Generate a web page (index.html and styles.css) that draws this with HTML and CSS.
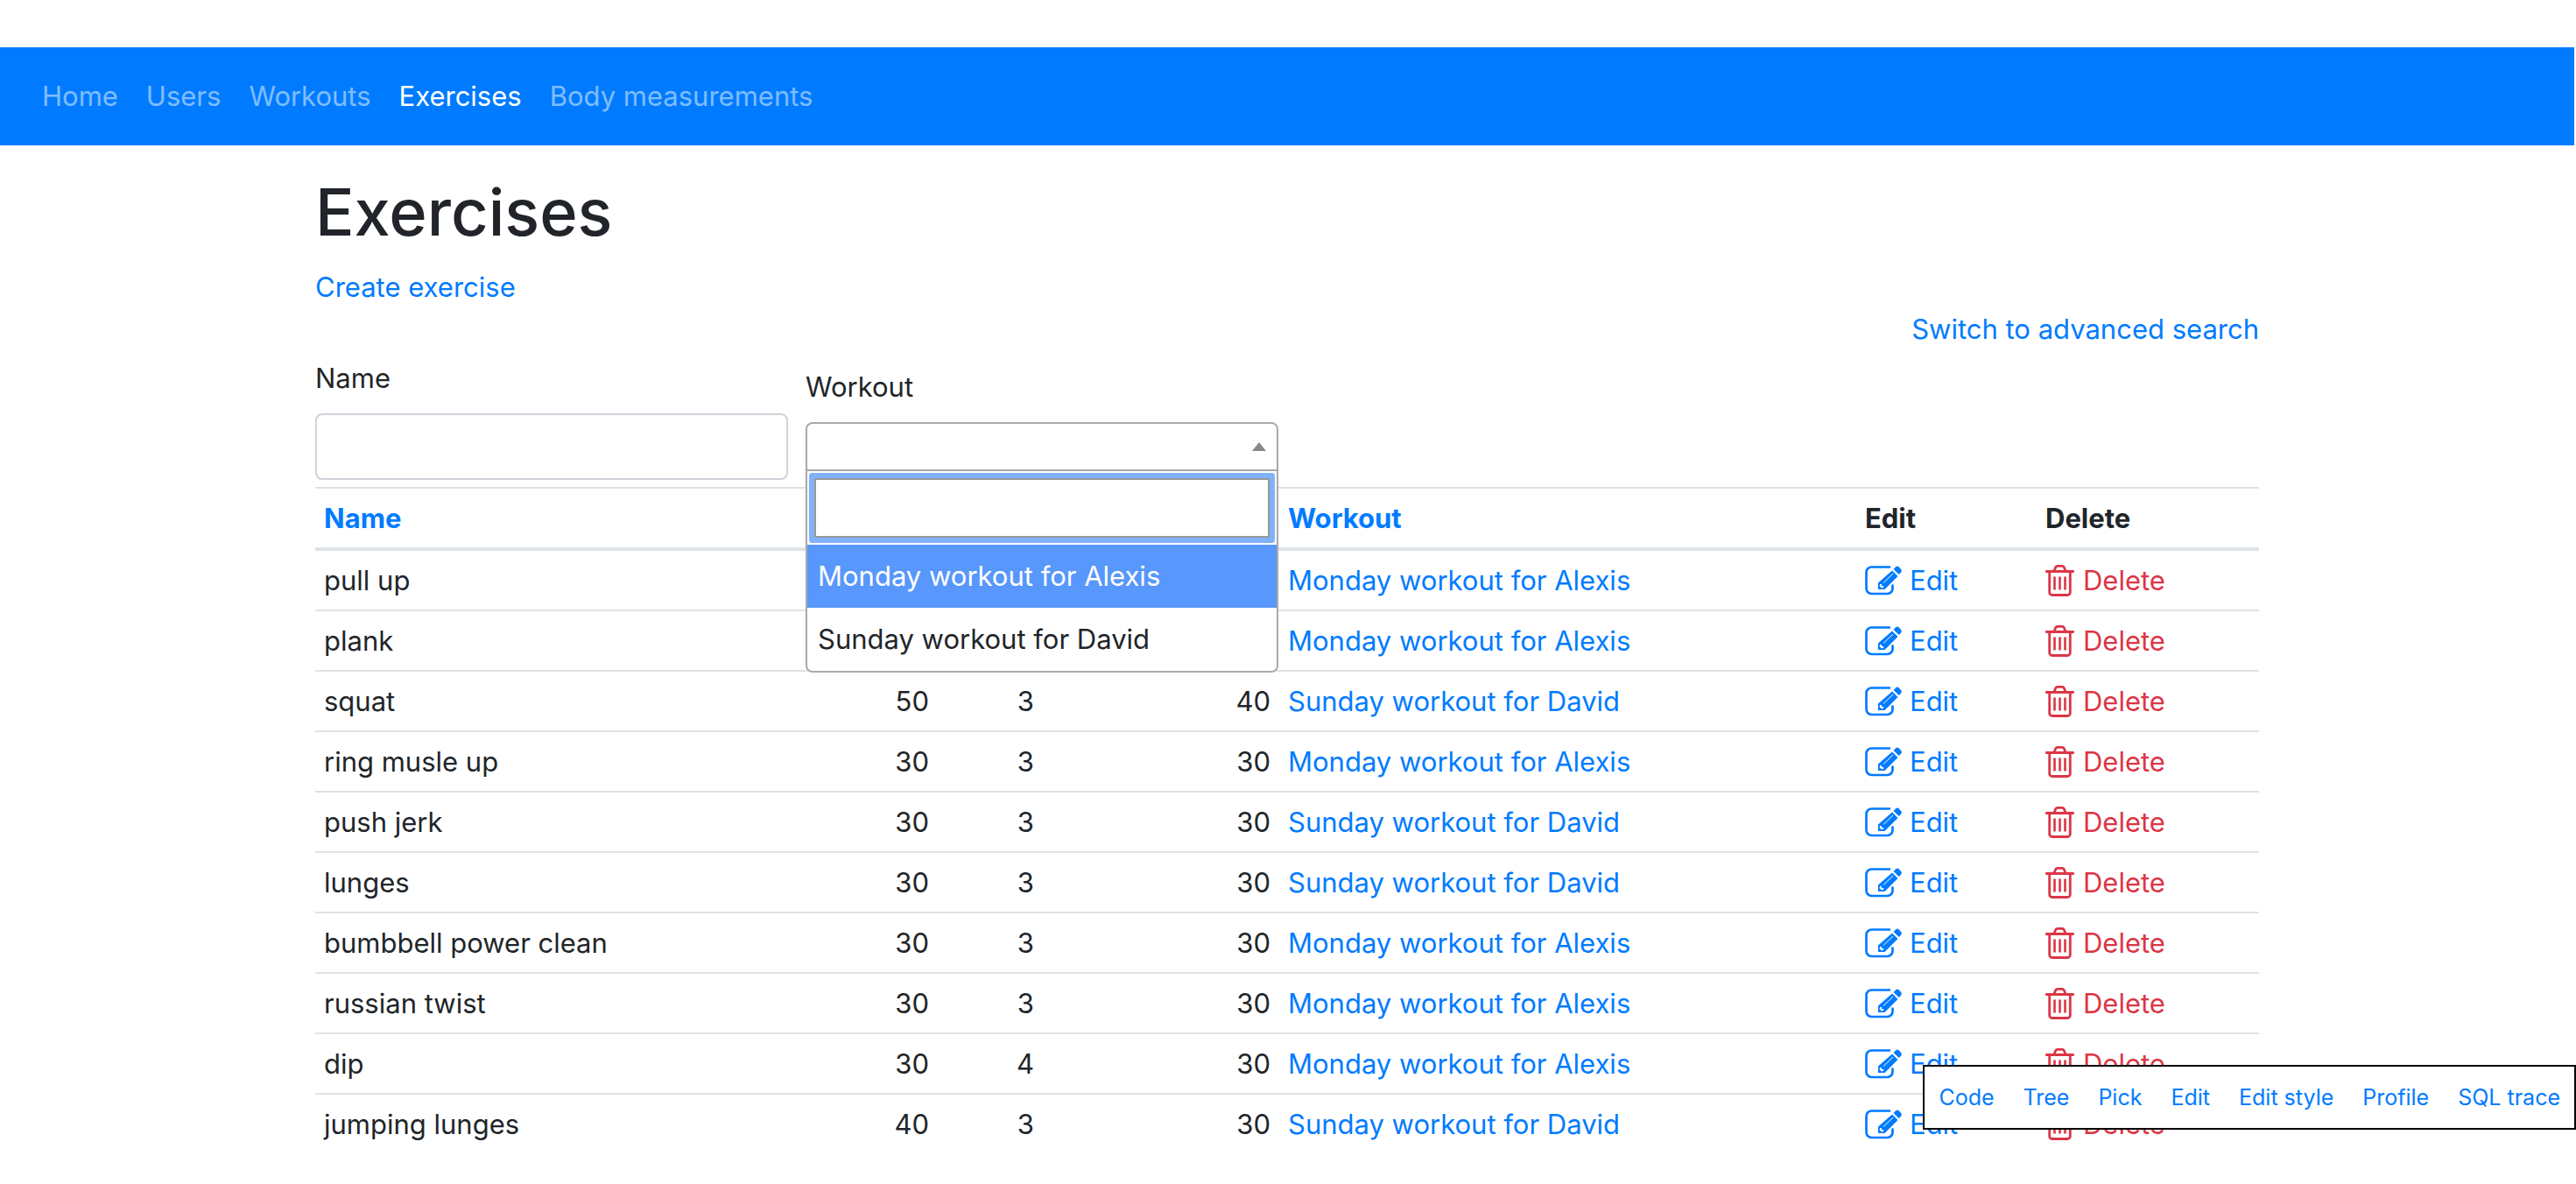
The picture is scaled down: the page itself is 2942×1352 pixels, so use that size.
FILE: index.html
```html
<!DOCTYPE html>
<html lang="en">
<head>
<meta charset="utf-8">
<title>Exercises</title>
<link rel="stylesheet" href="styles.css">
</head>
<body>
<svg class="sprite" aria-hidden="true">
  <symbol id="icon-edit" viewBox="0 0 42 34">
    <path d="M28 1.500H7.500a6 6 0 0 0-6 6v18.500a6 6 0 0 0 6 6h18a6 6 0 0 0 6-6V22.500" fill="none" stroke="currentColor" stroke-width="2.700" stroke-linecap="round"/>
    <path d="M31 5.500l6.500 6.500L22.500 27H15v-7.500z" fill="currentColor"/>
    <path d="M32.500 4l2.800-2.800a2.400 2.400 0 0 1 3.200 0l2.400 2.600a3 3 0 0 1 0 4L38.800 10z" fill="currentColor"/>
    <path d="M21 19.500L32 9" stroke="#fff" stroke-width="1" fill="none"/>
    <path d="M17.300 21h1.700v2h2.200v1.800l-2.200.7-2.500-2.500z" fill="#fff"/>
  </symbol>
  <symbol id="icon-trash" viewBox="0 0 34 36">
    <path d="M1.300 7.500h30.400M4.700 8v23.500a3 3 0 0 0 3 3h17.600a3 3 0 0 0 3-3V8M10 7l1.300-3.300a3 3 0 0 1 2.700-2.300h5a3 3 0 0 1 2.700 2.300L23 7" fill="none" stroke="currentColor" stroke-width="2.800" stroke-linecap="round"/>
    <path d="M10.500 13.500v15M16.500 13.500v15M22.500 13.500v15" fill="none" stroke="currentColor" stroke-width="2.600"/>
  </symbol>
</svg>
<nav class="navbar">
  <a href="#">Home</a>
  <a href="#">Users</a>
  <a href="#">Workouts</a>
  <a href="#" class="active">Exercises</a>
  <a href="#">Body measurements</a>
</nav>
<main class="container">
  <h1>Exercises</h1>
  <a class="create" href="#">Create exercise</a>
  <div class="switch"><a href="#">Switch to advanced search</a></div>
  <form class="filters">
    <div class="field">
      <label for="name">Name</label>
      <input class="control" id="name" type="text">
    </div>
    <div class="field field-select">
      <label for="workout">Workout</label>
      <div class="select">
        <button class="select-box" id="workout" type="button" aria-haspopup="listbox" aria-expanded="true"><span class="arrow"></span></button>
        <div class="dropdown">
          <div class="search"><input type="text" aria-label="Search workouts"></div>
          <ul role="listbox" aria-label="Workouts">
            <li role="option" aria-selected="true" class="highlighted">Monday workout for Alexis</li>
            <li role="option" aria-selected="false">Sunday workout for David</li>
          </ul>
        </div>
      </div>
    </div>
  </form>
  <table>
    <colgroup><col><col class="col-narrow"><col class="col-narrow"><col class="col-number"><col class="col-workout"><col class="col-edit"><col class="col-delete"></colgroup>
    <thead>
      <tr><th><a href="#">Name</a></th><th></th><th></th><th></th><th><a href="#">Workout</a></th><th>Edit</th><th>Delete</th></tr>
    </thead>
    <tbody id="rows"></tbody>
  </table>
</main>
<nav class="toolbar">
  <a href="#">Code</a>
  <a href="#">Tree</a>
  <a href="#">Pick</a>
  <a href="#">Edit</a>
  <a href="#">Edit style</a>
  <a href="#">Profile</a>
  <a href="#">SQL trace</a>
</nav>
<script src="script.js"></script>
</body>
</html>
```
FILE: styles.css
```css
* { box-sizing: border-box; }
body {
  margin: 0 2px 0 0;
  padding-top: 54px;
  background: #fff;
  color: #212529;
  font: 31px/48px Inter, "Liberation Sans", sans-serif;
}
a { color: #007bff; text-decoration: none; }
.sprite { display: none; }

.navbar {
  display: flex;
  gap: 32px;
  padding: 32px 48px;
  background: #007bff;
}
.navbar a { color: rgba(255, 255, 255, .5); }
.navbar .active { color: #fff; }

.container { max-width: 2220px; margin: 0 auto; padding-bottom: 32px; }
h1 {
  margin: 28px 0 14px;
  font-size: 74px;
  line-height: 96px;
  font-weight: 500;
}
.create { display: block; }
.switch { text-align: right; }

.filters { display: grid; grid-template-columns: repeat(4, 1fr); gap: 20px; padding: 8px 0; }
.field label { display: block; margin-bottom: 16px; }
.field-select { padding-top: 10px; }
.control {
  display: block;
  width: 100%;
  height: 76px;
  padding: 12px 24px;
  border: 2px solid #ced4da;
  border-radius: 8px;
  font: inherit;
}
.select { position: relative; }
.select-box {
  display: flex;
  align-items: center;
  justify-content: flex-end;
  width: 100%;
  height: 56px;
  padding: 0 12px;
  border: 2px solid #aaa;
  border-radius: 8px 8px 0 0;
  background: #fff;
}
.arrow { border: 8px solid transparent; border-top: 0; border-bottom: 10px solid #888; }
.dropdown {
  position: absolute;
  z-index: 1;
  top: 100%;
  left: 0;
  right: 0;
  border: 2px solid #aaa;
  border-top: 0;
  border-radius: 0 0 8px 8px;
  background: #fff;
}
.search { padding: 8px; }
.search input {
  display: block;
  width: 100%;
  height: 68px;
  padding: 8px;
  border: 2px solid #999;
  outline: 0;
  border-radius: 1px;
  box-shadow: 0 0 0 6px #80b1fb;
  font: inherit;
}
.dropdown ul { margin: 0; padding: 0; list-style: none; }
.dropdown li { padding: 12px; }
.highlighted { background: #5897fb; color: #fff; }

table { width: 100%; border-collapse: separate; border-spacing: 0; table-layout: fixed; }
th, td { padding: 10px; border-top: 2px solid #dee2e6; text-align: left; white-space: nowrap; }
th { padding-bottom: 9px; border-bottom: 4px solid #dee2e6; }
td { padding-bottom: 9px; }
tbody tr:first-child td { border-top: 0; }
.num { text-align: right; }
.col-narrow { width: 120px; }
.col-number { width: 270px; }
.col-workout { width: 659px; }
.col-edit { width: 206px; }
.col-delete { width: 254px; }
.icon-link { display: flex; align-items: center; gap: 9px; }
.icon-edit { width: 42px; height: 34px; }
.icon-trash { width: 34px; height: 36px; }
.danger { color: #dc3545; }

.toolbar {
  position: fixed;
  right: 0;
  bottom: 62px;
  z-index: 2;
  display: flex;
  gap: 33px;
  padding: 16px;
  border: 2px solid #000;
  background: #fff;
  font-size: 25px;
  line-height: 38px;
}
```
FILE: script.js
```js
const monday = "Monday workout for Alexis";
const sunday = "Sunday workout for David";

const exercises = [
  ["pull up", "", "", "", monday],
  ["plank", "", "", "", monday],
  ["squat", 50, 3, 40, sunday],
  ["ring musle up", 30, 3, 30, monday],
  ["push jerk", 30, 3, 30, sunday],
  ["lunges", 30, 3, 30, sunday],
  ["bumbbell power clean", 30, 3, 30, monday],
  ["russian twist", 30, 3, 30, monday],
  ["dip", 30, 4, 30, monday],
  ["jumping lunges", 40, 3, 30, sunday]
];

document.getElementById("rows").innerHTML = exercises.map(([name, a, b, c, workout]) => `
  <tr>
    <td>${name}</td>
    <td class="num">${a}</td>
    <td class="num">${b}</td>
    <td class="num">${c}</td>
    <td><a href="#">${workout}</a></td>
    <td><a class="icon-link" href="#"><svg class="icon-edit" aria-hidden="true"><use href="#icon-edit"/></svg>Edit</a></td>
    <td><a class="icon-link danger" href="#"><svg class="icon-trash" aria-hidden="true"><use href="#icon-trash"/></svg>Delete</a></td>
  </tr>`).join("");
```
